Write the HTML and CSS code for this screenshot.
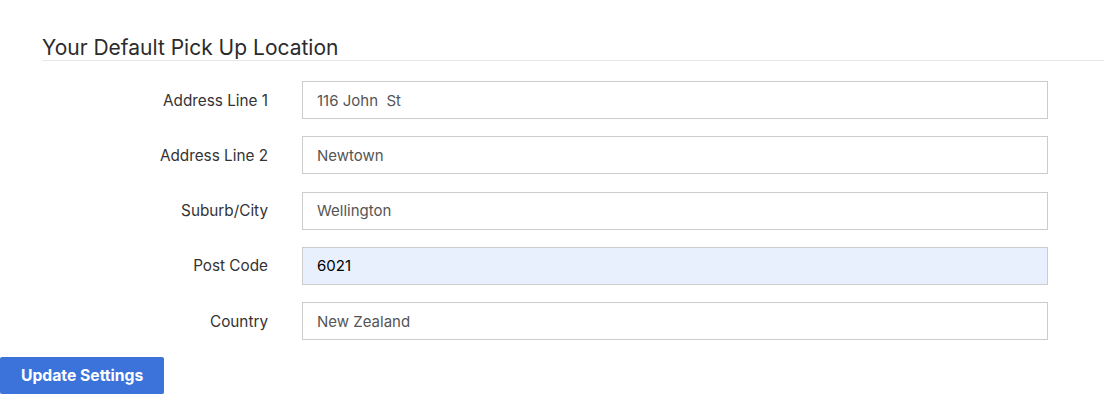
FILE: index.html
```html
<!DOCTYPE html>
<html>
<head>
<meta charset="utf-8">
<link rel="stylesheet" href="styles.css">
</head>
<body>
<div class="page">
  <h2 class="title">Your Default Pick Up Location</h2>
  <form class="form">
    <div class="row">
      <label class="label">Address Line 1</label>
      <input class="field" type="text" value="116 John  St">
    </div>
    <div class="row">
      <label class="label">Address Line 2</label>
      <input class="field" type="text" value="Newtown">
    </div>
    <div class="row">
      <label class="label">Suburb/City</label>
      <input class="field" type="text" value="Wellington">
    </div>
    <div class="row">
      <label class="label">Post Code</label>
      <input class="field autofill" type="text" value="6021">
    </div>
    <div class="row">
      <label class="label">Country</label>
      <input class="field" type="text" value="New Zealand">
    </div>
  </form>
  <button class="btn" type="button">Update Settings</button>
</div>
</body>
</html>
```
FILE: styles.css
```css
html, body {
  margin: 0;
  padding: 0;
  background: #fff;
}
body {
  font-family: Inter, "Liberation Sans", sans-serif;
  color: #333;
}
.page {
  padding-top: 35px;
}
.title {
  margin: 0 0 0 42px;
  font-size: 21px;
  line-height: 25px;
  font-weight: 400;
  color: #2b2b2b;
  border-bottom: 1px solid #e6e6e6;
}
.form {
  display: flex;
  flex-direction: column;
  gap: 17.25px;
  padding-top: 20px;
}
.row {
  display: grid;
  grid-template-columns: 268px 746px;
  column-gap: 34px;
  align-items: center;
}
.label {
  text-align: right;
  font-size: 15.3px;
  color: #333;
}
.field {
  box-sizing: border-box;
  height: 38px;
  width: 746px;
  margin: 0;
  border: 1px solid #ccc;
  padding: 0 14px;
  font-family: inherit;
  font-size: 15px;
  color: #555;
  background: #fff;
  outline: none;
}
.field.autofill {
  background: #e8f0fe;
  color: #000;
}
.btn {
  display: block;
  margin-top: 17px;
  height: 37px;
  padding: 0 21px;
  border: 0;
  border-radius: 2px;
  background: #3b73db;
  color: #fff;
  font-family: inherit;
  font-size: 15.7px;
  font-weight: 700;
  box-shadow: 0 3px 0 #e4e4e4;
}
```
